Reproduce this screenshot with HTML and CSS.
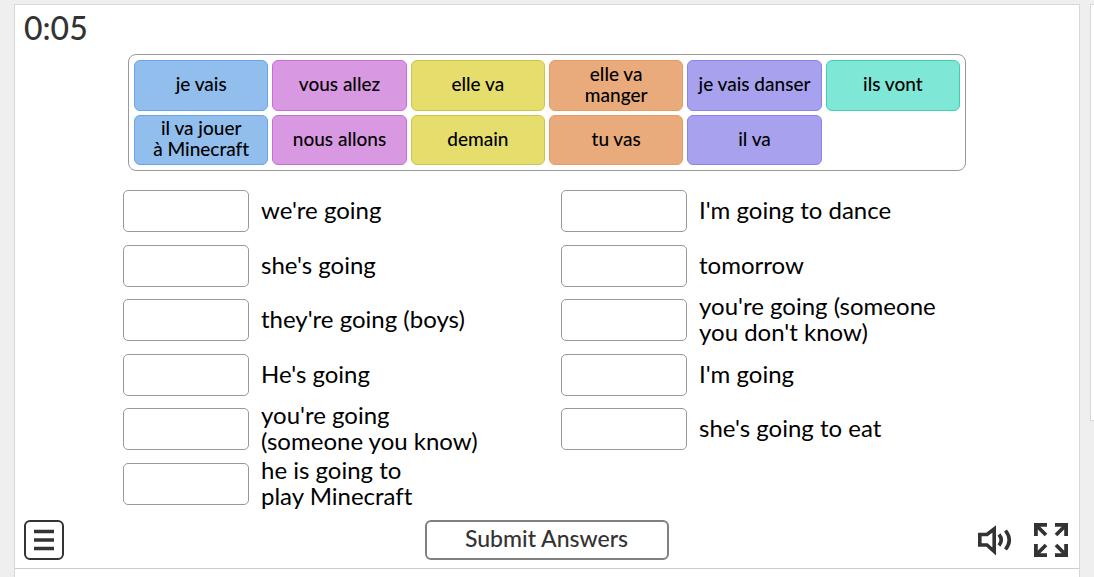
FILE: index.html
```html
<!DOCTYPE html>
<html lang="en">
<head>
<meta charset="utf-8">
<title>Match up</title>
<link rel="stylesheet" href="styles.css">
</head>
<body>
<main class="card">
  <section class="game">
    <header class="timer">0:05</header>
    <div class="bank" lang="fr">
      <button class="tile blue">je vais</button>
      <button class="tile pink">vous allez</button>
      <button class="tile yellow">elle va</button>
      <button class="tile orange">elle va<br>manger</button>
      <button class="tile violet">je vais danser</button>
      <button class="tile teal">ils vont</button>
      <button class="tile blue">il va jouer<br>à Minecraft</button>
      <button class="tile pink">nous allons</button>
      <button class="tile yellow">demain</button>
      <button class="tile orange">tu vas</button>
      <button class="tile violet">il va</button>
    </div>
    <div class="prompts">
      <div class="prompt"><button class="slot" aria-labelledby="p1"></button><span class="text" id="p1">we're going</span></div>
      <div class="prompt"><button class="slot" aria-labelledby="p2"></button><span class="text" id="p2">she's going</span></div>
      <div class="prompt"><button class="slot" aria-labelledby="p3"></button><span class="text" id="p3">they're going (boys)</span></div>
      <div class="prompt"><button class="slot" aria-labelledby="p4"></button><span class="text" id="p4">He's going</span></div>
      <div class="prompt"><button class="slot" aria-labelledby="p5"></button><span class="text" id="p5">you're going<br>(someone you know)</span></div>
      <div class="prompt"><button class="slot" aria-labelledby="p6"></button><span class="text" id="p6">he is going to<br>play Minecraft</span></div>
      <div class="prompt"><button class="slot" aria-labelledby="p7"></button><span class="text" id="p7">I'm going to dance</span></div>
      <div class="prompt"><button class="slot" aria-labelledby="p8"></button><span class="text" id="p8">tomorrow</span></div>
      <div class="prompt"><button class="slot" aria-labelledby="p9"></button><span class="text" id="p9">you're going (someone<br>you don't know)</span></div>
      <div class="prompt"><button class="slot" aria-labelledby="p10"></button><span class="text" id="p10">I'm going</span></div>
      <div class="prompt"><button class="slot" aria-labelledby="p11"></button><span class="text" id="p11">she's going to eat</span></div>
    </div>
    <footer class="controls">
      <div class="group">
        <button class="icon menu" aria-label="Menu">
          <svg width="22" height="22" viewBox="0 0 22 22" stroke="#333" stroke-width="3.300"><path d="M1 2.500h20M1 11h20M1 19.500h20"/></svg>
        </button>
      </div>
      <button class="submit">Submit Answers</button>
      <div class="group end">
        <button class="icon" aria-label="Sound">
          <svg width="36" height="32" viewBox="0 0 36 32" fill="none" stroke="#333" stroke-width="3.600"><path d="M2.800 10.500h7.200L17.200 5v22.500l-7.200-6.500H2.800z"/><path d="M22 10.500q4.500 5.500 0 11M28.500 6.500q7.500 9.500 0 19"/></svg>
        </button>
        <button class="icon" aria-label="Full screen">
          <svg width="36" height="36" viewBox="0 0 36 36" fill="none" stroke="#333" stroke-width="3.800"><path d="M2.900 14V2.900H14M3 3l10 10M22 2.900h11.100V14M33 3l-10 10M2.900 22v11.100H14M3 33l10-10M33.100 22v11.100H22M33 33l-10-10"/></svg>
        </button>
      </div>
    </footer>
  </section>
</main>
<aside class="side"></aside>
</body>
</html>
```
FILE: styles.css
```css
* {
  box-sizing: border-box;
}

body {
  margin: 0;
  min-height: 100vh;
  display: flex;
  gap: 10px;
  padding: 4px 0 0 14px;
  background: #efefef;
  color: #000;
  font-family: Lato, "Open Sans", sans-serif;
  font-variant-ligatures: none;
}

button {
  margin: 0;
  padding: 0;
  font: inherit;
  font-variant-ligatures: none;
  color: inherit;
  background: none;
  border: 0;
  cursor: pointer;
}

svg {
  display: block;
}

.card {
  flex: 1;
  display: flex;
  flex-direction: column;
  padding-bottom: 8px;
  background: #fff;
  border: 1px solid #d8d8d8;
  border-bottom: 0;
}

.game {
  flex: 1;
  display: flex;
  flex-direction: column;
  border-bottom: 1px solid #ccc;
}

.timer {
  padding: 5px 9px 8px;
  color: #333;
  font-size: 32px;
  font-weight: 500;
  line-height: 36px;
}

.bank {
  display: grid;
  grid-template-columns: repeat(6, 1fr);
  grid-template-rows: 51px 50px;
  gap: 4px;
  margin: 0 113px;
  padding: 5px;
  border: 1px solid #999;
  border-radius: 8px;
}

.tile {
  padding-bottom: 4px;
  border: 1px solid;
  border-radius: 6px;
  font-size: 19px;
  font-weight: 500;
  line-height: 21px;
  white-space: nowrap;
}

.blue { background: #91beec; border-color: #66a5e8; }
.pink { background: #d998e2; border-color: #cb6bd7; }
.yellow { background: #e5de6d; border-color: #cdc54c; }
.orange { background: #e9ab7c; border-color: #e59a62; }
.violet { background: #a8a2ee; border-color: #8a82ea; }
.teal { background: #7ee7d6; border-color: #42cdb5; }

.prompts {
  flex: 1;
  display: grid;
  grid-auto-flow: column;
  grid-template-rows: repeat(6, 1fr);
  grid-template-columns: 1fr 1fr;
  column-gap: 28px;
  padding: 13px 108px 0;
  font-size: 24px;
  line-height: 26px;
}

.prompt {
  display: flex;
  align-items: center;
  gap: 12px;
  white-space: nowrap;
}

.text {
  padding-bottom: 2px;
}

.slot {
  width: 126px;
  height: 42px;
  border: 1px solid #999;
  border-radius: 5px;
}

.controls {
  display: grid;
  grid-template-columns: 1fr 244px 1fr;
  align-items: center;
  padding: 9px 10px 8px 9px;
  color: #333;
}

.group {
  display: flex;
  align-items: center;
  gap: 20px;
}

.end {
  justify-content: flex-end;
}

.menu {
  display: grid;
  place-items: center;
  width: 40px;
  height: 40px;
  border: 2px solid #333;
  border-radius: 6px;
}

.submit {
  height: 40px;
  padding-bottom: 4px;
  border: 2px solid #808080;
  border-radius: 6px;
  font-size: 23px;
  font-weight: 500;
}

.side {
  width: 4px;
  height: 417px;
  background: #fff;
  border: 1px solid #d8d8d8;
  border-right: 0;
}
```
